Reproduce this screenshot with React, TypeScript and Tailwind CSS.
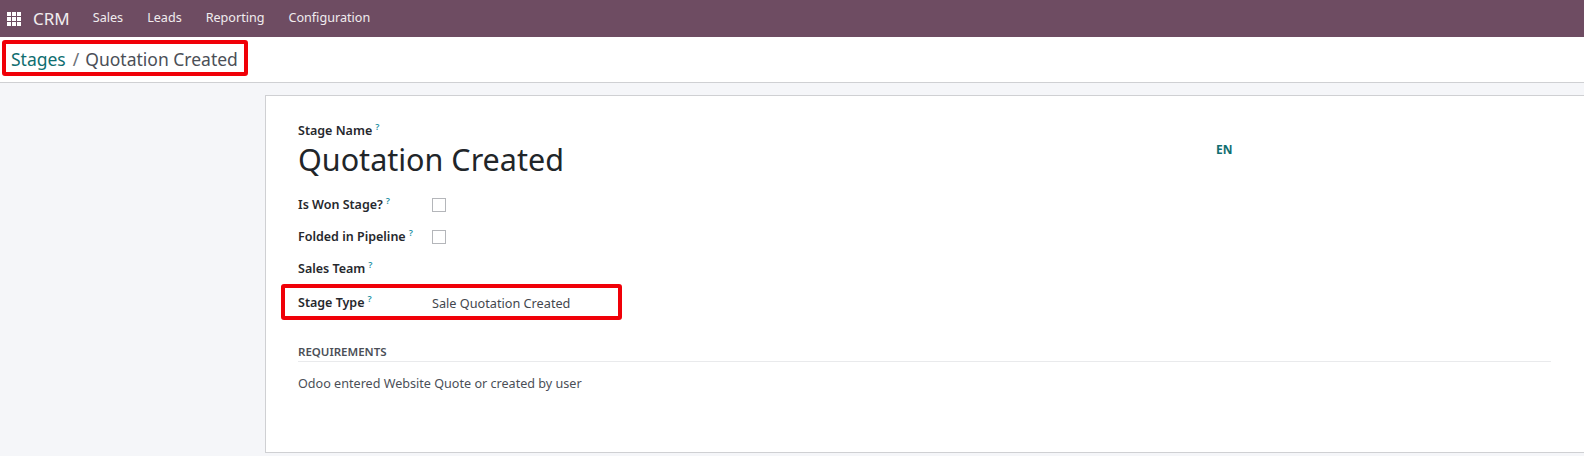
import React from 'react';

const font = { fontFamily: '"Noto Sans", sans-serif' };

const Help = () => (
  <sup className="ml-[3px] -top-[5px] text-[9px] font-semibold text-[#1b8fa3] leading-none">?</sup>
);

const Label: React.FC<{ text: string; className?: string }> = ({ text, className }) => (
  <div className={`flex items-center h-[20px] w-[134px] shrink-0 text-[12.5px] font-semibold text-[#26282d] leading-none ${className ?? ''}`}>
    <span>{text}</span>
    <Help />
  </div>
);

const Checkbox = () => <div className="w-[14px] h-[14px] border border-[#b4b6ba] bg-white" />;

const App: React.FC = () => {
  return (
    <div className="w-[1584px] h-[456px] overflow-hidden flex flex-col bg-[#f5f6f9]" style={font}>
      <nav className="h-[37px] shrink-0 bg-[#6e4c62] flex items-center text-[#f1ecef]">
        <svg className="ml-[7px] w-[14px] h-[14px]" viewBox="0 0 14 14" fill="#ffffff">
          {[0, 5, 10].map((y) =>
            [0, 5, 10].map((x) => <rect key={`${x}-${y}`} x={x} y={y} width="4" height="4" />)
          )}
        </svg>
        <span className="ml-[12px] text-[17px] leading-none">CRM</span>
        <div className="ml-[23px] flex gap-[24px] text-[12.6px] leading-none">
          <span>Sales</span>
          <span>Leads</span>
          <span>Reporting</span>
          <span>Configuration</span>
        </div>
      </nav>

      <header className="h-[46px] shrink-0 bg-white border-b border-[#cfd0d3] flex items-start pl-[2px] pt-[3px]">
        <div className="h-[36px] w-[246px] border-[4px] border-[#f00008] rounded-[3px] flex items-center pl-[5px] pt-[3px] text-[17.5px] leading-none text-[#4b4f57] whitespace-nowrap">
          <span className="text-[#0f6e70]">Stages</span>
          <span className="ml-[7px] mr-[6px] text-[#6b6f76]">/</span>
          <span>Quotation Created</span>
        </div>
      </header>

      <main className="flex-1 pl-[265px] pt-[12px]">
        <section className="h-[358px] bg-white border border-r-0 border-[#cfd0d3] pl-[32px] pr-[33px] pt-[25px]">
          <div className="flex items-center h-[20px] text-[12.5px] font-semibold text-[#26282d] leading-none">
            <span>Stage Name</span>
            <Help />
          </div>
          <div className="flex items-center h-[44px] -mt-[4px]">
            <h1 className="text-[30.5px] leading-none text-[#212529]">Quotation Created</h1>
            <span className="ml-[652px] text-[12px] font-bold text-[#0f6e70] -mt-[18px]">EN</span>
          </div>

          <div className="mt-[14px] flex items-center h-[20px]">
            <Label text="Is Won Stage?" />
            <Checkbox />
          </div>
          <div className="mt-[12px] flex items-center h-[20px]">
            <Label text="Folded in Pipeline" />
            <Checkbox />
          </div>
          <div className="mt-[12px] flex items-center h-[20px]">
            <Label text="Sales Team" />
          </div>
          <div className="mt-[14px] flex items-center h-[20px] relative">
            <Label text="Stage Type" />
            <span className="text-[12.7px] text-[#43474e] leading-none">Sale Quotation Created</span>
            <div className="absolute -left-[17px] -top-[9px] w-[341px] h-[36px] border-[4px] border-[#f00008] rounded-[3px]" />
          </div>

          <div className="mt-[33px] h-[16px] border-b border-[#e9eaec] text-[11.5px] font-semibold text-[#4b4f57] leading-none">
            REQUIREMENTS
          </div>
          <p className="mt-[16px] text-[12.6px] leading-none text-[#4b4f57]">Odoo entered Website Quote or created by user</p>
        </section>
      </main>
    </div>
  );
};

export default App;
